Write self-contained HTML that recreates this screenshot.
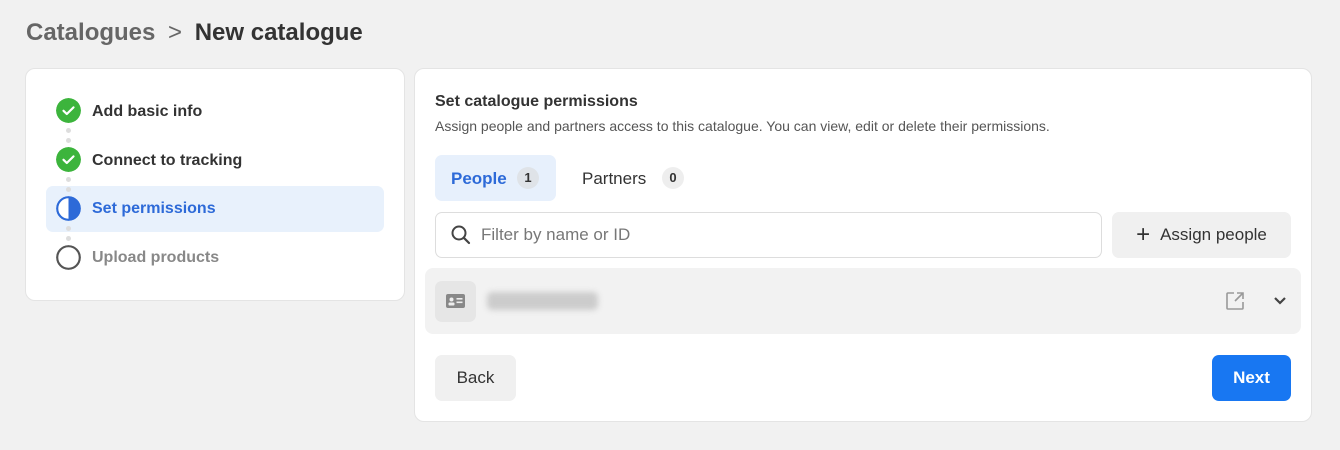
<!DOCTYPE html><html><head><style>
*{box-sizing:border-box;margin:0;padding:0}
body{width:1340px;height:450px;background:#f1f1f1;font-family:"Liberation Sans",sans-serif;position:relative;overflow:hidden;color:#1c1e21}
.a{position:absolute}
.card{background:#fff;border-radius:10px;border:1px solid #e4e4e4}
.step{position:absolute;left:92px;font-size:16px;font-weight:bold;color:#333;line-height:20px}
.ic{position:absolute;left:56px;width:25px;height:25px;border-radius:50%}
.dot{position:absolute;left:66px;width:5px;height:5px;border-radius:50%;background:#ddd}
.btn{position:absolute;background:#f0f0f0;border-radius:7px;font-size:17px;color:#333;display:flex;align-items:center;justify-content:center}
</style></head><body>
<div class="a" style="left:26px;top:18px;font-size:24px;font-weight:bold;color:#666;line-height:30px">Catalogues <span style="font-weight:normal;margin:0 6px">&gt;</span> <span style="color:#333">New catalogue</span></div>
<div class="a card" style="left:25px;top:68px;width:380px;height:233px"></div>
<div class="a" style="left:46px;top:186px;width:338px;height:46px;background:#e8f1fc;border-radius:7px"></div>
<div class="dot" style="top:128px"></div><div class="dot" style="top:138px"></div>
<div class="dot" style="top:177px"></div><div class="dot" style="top:187px"></div>
<div class="dot" style="top:226px"></div><div class="dot" style="top:236px"></div>
<svg class="ic" style="top:98px" viewBox="0 0 25 25"><circle cx="12.5" cy="12.5" r="12.5" fill="#3cb43c"/><path d="M7.5 12.8l3.3 3.2 6.7-6.6" stroke="#fff" stroke-width="2.2" fill="none" stroke-linecap="round" stroke-linejoin="round"/></svg>
<svg class="ic" style="top:147px" viewBox="0 0 25 25"><circle cx="12.5" cy="12.5" r="12.5" fill="#3cb43c"/><path d="M7.5 12.8l3.3 3.2 6.7-6.6" stroke="#fff" stroke-width="2.2" fill="none" stroke-linecap="round" stroke-linejoin="round"/></svg>
<svg class="ic" style="top:196px" viewBox="0 0 25 25"><circle cx="12.5" cy="12.5" r="11.3" fill="#fff" stroke="#2d6ad8" stroke-width="2.2"/><path d="M12.5 1.2a11.3 11.3 0 0 1 0 22.6z" fill="#2d6ad8"/></svg>
<svg class="ic" style="top:245px" viewBox="0 0 25 25"><circle cx="12.5" cy="12.5" r="11.3" fill="none" stroke="#555" stroke-width="2.2"/></svg>
<div class="step" style="top:102px">Add basic info</div>
<div class="step" style="top:151px">Connect to tracking</div>
<div class="step" style="top:199px;color:#2d6ad8">Set permissions</div>
<div class="step" style="top:248px;color:#888">Upload products</div>

<div class="a card" style="left:414px;top:68px;width:898px;height:354px"></div>
<div class="a" style="left:435px;top:93px;font-size:16px;font-weight:bold;color:#333">Set catalogue permissions</div>
<div class="a" style="left:435px;top:118px;font-size:14px;color:#555">Assign people and partners access to this catalogue. You can view, edit or delete their permissions.</div>
<div class="a" style="left:435px;top:155px;width:121px;height:46px;background:#e7f0fc;border-radius:7px"></div>
<div class="a" style="left:451px;top:169px;font-size:17px;font-weight:bold;color:#2d6ad8">People</div>
<div class="a" style="left:517px;top:167px;width:22px;height:22px;border-radius:11px;background:#dfe3e8;font-size:13px;font-weight:bold;text-align:center;line-height:22px;color:#333">1</div>
<div class="a" style="left:582px;top:169px;font-size:17px;color:#333">Partners</div>
<div class="a" style="left:662px;top:167px;width:22px;height:22px;border-radius:11px;background:#eee;font-size:13px;font-weight:bold;text-align:center;line-height:22px;color:#333">0</div>
<div class="a" style="left:435px;top:212px;width:667px;height:46px;border:1px solid #ddd;border-radius:7px"></div>
<svg class="a" style="left:450px;top:224px" width="22" height="22" viewBox="0 0 22 22"><circle cx="9" cy="9" r="6.5" fill="none" stroke="#444" stroke-width="2"/><path d="M13.7 13.7L19 19" stroke="#444" stroke-width="2.2" stroke-linecap="round"/></svg>
<div class="a" style="left:481px;top:225px;font-size:17px;color:#777">Filter by name or ID</div>
<div class="btn" style="left:1112px;top:212px;width:179px;height:46px"><span style="font-size:24px;margin-right:10px;font-weight:300">+</span>Assign people</div>
<div class="a" style="left:425px;top:268px;width:876px;height:66px;background:#f2f2f2;border-radius:8px"></div>
<div class="a" style="left:435px;top:281px;width:41px;height:41px;background:#e6e6e6;border-radius:7px"></div>
<svg class="a" style="left:445px;top:293px" width="21" height="16" viewBox="0 0 21 16"><rect x="1" y="1" width="19" height="14" rx="2" fill="#888"/><circle cx="6.5" cy="6.5" r="2" fill="#eee"/><rect x="3.5" y="9.5" width="6" height="3" rx="1" fill="#eee"/><rect x="11.5" y="5" width="6" height="1.6" fill="#eee"/><rect x="11.5" y="8.5" width="6" height="1.6" fill="#eee"/></svg>
<div class="a" style="left:487px;top:292px;width:111px;height:18px;background:#ccc;border-radius:5px;filter:blur(3px)"></div>
<svg class="a" style="left:1225px;top:291px" width="20" height="20" viewBox="0 0 20 20"><path d="M9 2H3a1 1 0 0 0-1 1v14a1 1 0 0 0 1 1h14a1 1 0 0 0 1-1v-6M12 2h6v6M18 2l-8 8" fill="none" stroke="#999" stroke-width="1.6"/></svg>
<svg class="a" style="left:1273px;top:295px" width="14" height="12" viewBox="0 0 14 12"><path d="M2 3l5 5 5-5" fill="none" stroke="#444" stroke-width="2.2"/></svg>
<div class="btn" style="left:435px;top:355px;width:81px;height:46px">Back</div>
<div class="btn" style="left:1212px;top:355px;width:79px;height:46px;background:#1877f2;color:#fff;font-weight:bold">Next</div>
</body></html>
